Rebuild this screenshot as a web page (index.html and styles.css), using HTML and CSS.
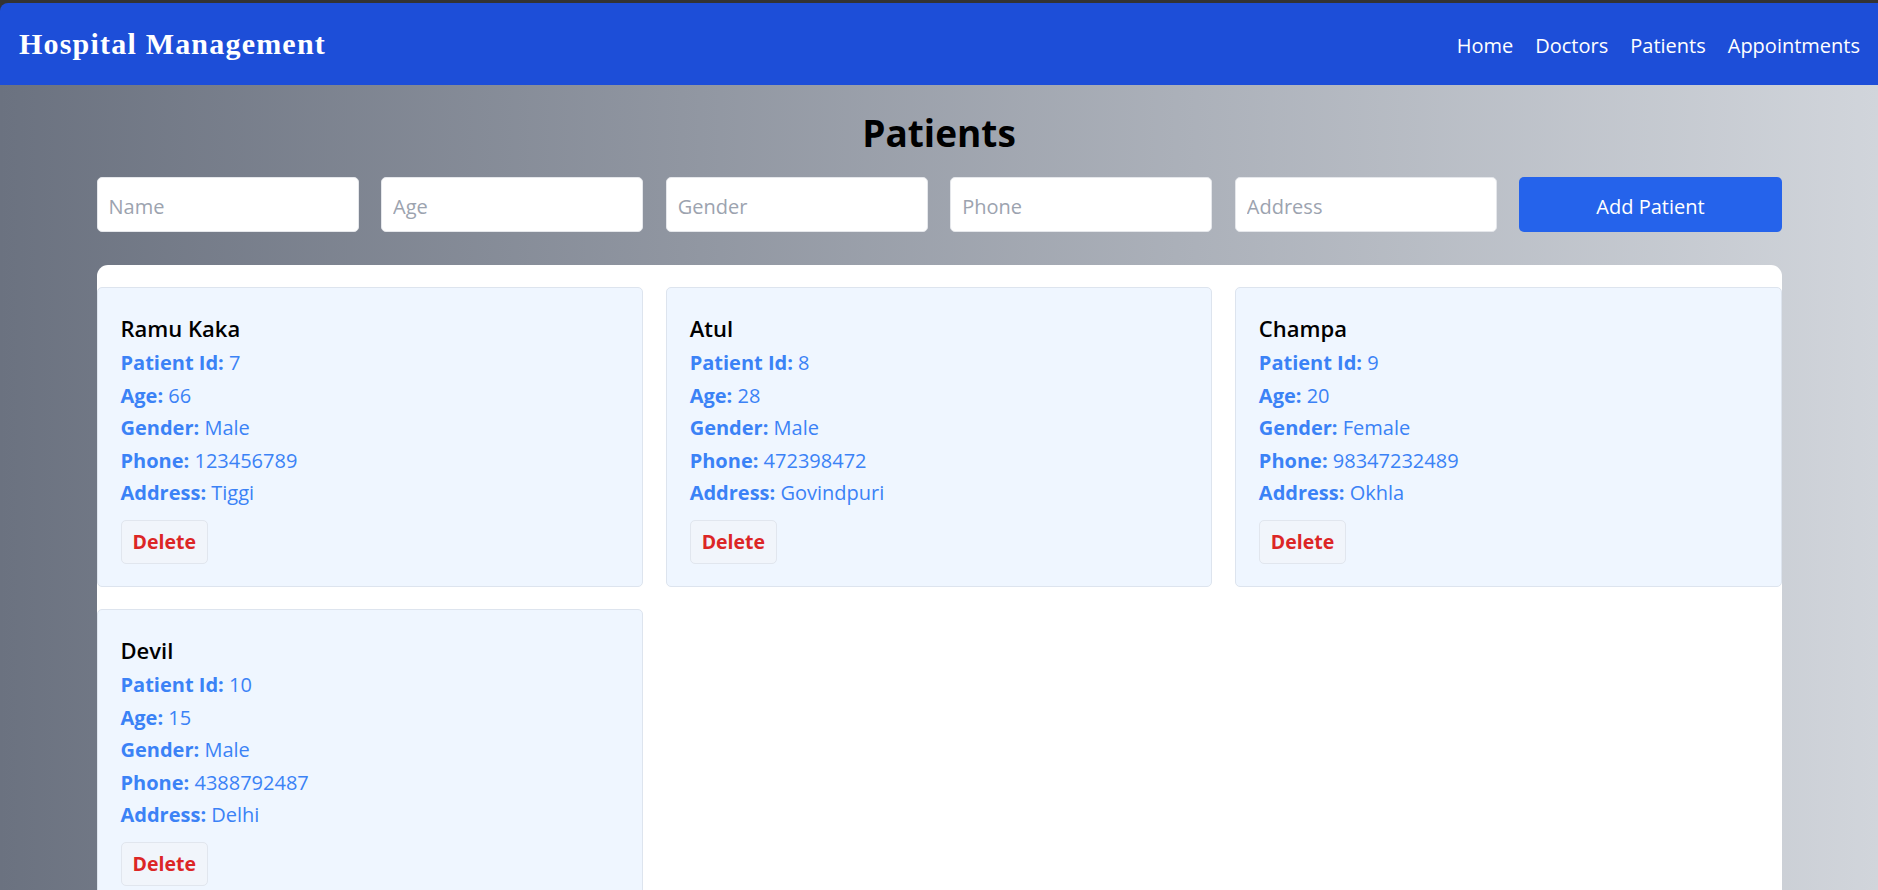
FILE: index.html
```html
<!DOCTYPE html>
<html lang="en">
<head>
<meta charset="utf-8">
<title>Hospital Management</title>
<link rel="stylesheet" href="styles.css">
</head>
<body>
<div class="frame">
  <header class="topbar">
    <div class="brand">Hospital Management</div>
    <nav class="nav">
      <a href="#" class="nav-link">Home</a>
      <a href="#" class="nav-link">Doctors</a>
      <a href="#" class="nav-link">Patients</a>
      <a href="#" class="nav-link">Appointments</a>
    </nav>
  </header>
  <main class="page">
    <div class="container">
      <h1 class="title">Patients</h1>
      <form class="add-form">
        <input class="field" type="text" placeholder="Name">
        <input class="field" type="text" placeholder="Age">
        <input class="field" type="text" placeholder="Gender">
        <input class="field" type="text" placeholder="Phone">
        <input class="field" type="text" placeholder="Address">
        <button class="add-btn" type="button">Add Patient</button>
      </form>
      <section class="panel">
        <div class="card">
          <h3 class="card-name">Ramu Kaka</h3>
          <p class="row"><b class="label">Patient Id:</b> 7</p>
          <p class="row"><b class="label">Age:</b> 66</p>
          <p class="row"><b class="label">Gender:</b> Male</p>
          <p class="row"><b class="label">Phone:</b> 123456789</p>
          <p class="row"><b class="label">Address:</b> Tiggi</p>
          <button class="del-btn" type="button">Delete</button>
        </div>
        <div class="card">
          <h3 class="card-name">Atul</h3>
          <p class="row"><b class="label">Patient Id:</b> 8</p>
          <p class="row"><b class="label">Age:</b> 28</p>
          <p class="row"><b class="label">Gender:</b> Male</p>
          <p class="row"><b class="label">Phone:</b> 472398472</p>
          <p class="row"><b class="label">Address:</b> Govindpuri</p>
          <button class="del-btn" type="button">Delete</button>
        </div>
        <div class="card">
          <h3 class="card-name">Champa</h3>
          <p class="row"><b class="label">Patient Id:</b> 9</p>
          <p class="row"><b class="label">Age:</b> 20</p>
          <p class="row"><b class="label">Gender:</b> Female</p>
          <p class="row"><b class="label">Phone:</b> 98347232489</p>
          <p class="row"><b class="label">Address:</b> Okhla</p>
          <button class="del-btn" type="button">Delete</button>
        </div>
        <div class="card">
          <h3 class="card-name">Devil</h3>
          <p class="row"><b class="label">Patient Id:</b> 10</p>
          <p class="row"><b class="label">Age:</b> 15</p>
          <p class="row"><b class="label">Gender:</b> Male</p>
          <p class="row"><b class="label">Phone:</b> 4388792487</p>
          <p class="row"><b class="label">Address:</b> Delhi</p>
          <button class="del-btn" type="button">Delete</button>
        </div>
      </section>
    </div>
  </main>
</div>
</body>
</html>
```
FILE: styles.css
```css
* { box-sizing: border-box; }

html, body {
  margin: 0;
  padding: 0;
}

body {
  font-family: "Open Sans", "Noto Sans", sans-serif;
  background: #333333;
  color: #000;
}

.frame {
  padding-top: 3px;
  background: #333333;
  min-height: 100vh;
  display: flex;
  flex-direction: column;
}

.topbar {
  height: 82px;
  background: #1d4ed8;
  border-top-left-radius: 8px;
  display: flex;
  align-items: center;
  justify-content: space-between;
  padding: 0 18px 0 19px;
}

.brand {
  font-family: "Liberation Serif", "Times New Roman", serif;
  font-weight: 700;
  font-size: 30px;
  letter-spacing: 1.2px;
  color: #ffffff;
  line-height: 1;
}

.nav {
  display: flex;
  gap: 22px;
  padding-top: 3px;
}

.nav-link {
  color: #ffffff;
  text-decoration: none;
  font-size: 20px;
  line-height: 28px;
}

.page {
  flex: 1;
  background: linear-gradient(to right, #6b7280, #d1d5db);
}

.container {
  width: 1685px;
  margin: 0 auto;
  padding-top: 26px;
}

.title {
  margin: 0 0 22px;
  text-align: center;
  font-size: 37px;
  line-height: 44px;
  font-weight: 700;
  color: #000;
}

.add-form {
  display: grid;
  grid-template-columns: repeat(6, minmax(0, 1fr));
  gap: 22.5px;
  margin: 0 0 33px;
}

.field {
  width: 100%;
  min-width: 0;
  height: 55px;
  border: 1px solid #e5e7eb;
  border-radius: 5px;
  background: #ffffff;
  padding: 3px 11px 0;
  font-family: "Open Sans", "Noto Sans", sans-serif;
  font-size: 20px;
  color: #111827;
  outline: none;
}

.field::placeholder {
  color: #9ca3af;
}

.add-btn {
  width: 100%;
  min-width: 0;
  height: 55px;
  border: none;
  border-radius: 5px;
  background: #2563eb;
  color: #ffffff;
  font-family: "Open Sans", "Noto Sans", sans-serif;
  font-size: 20px;
  padding: 3px 0 0;
  cursor: pointer;
}

.panel {
  background: #ffffff;
  border-radius: 11px;
  padding: 22px 0 24px;
  display: grid;
  grid-template-columns: repeat(3, minmax(0, 1fr));
  gap: 22.5px;
}

.card {
  background: #eff6ff;
  border: 1px solid #dde4ee;
  border-radius: 5px;
  padding: 24px 23px 22px;
  display: flex;
  flex-direction: column;
  align-items: flex-start;
}

.card-name {
  margin: 0 0 3px;
  font-size: 22px;
  line-height: 32px;
  font-weight: 600;
  color: #000;
}

.row {
  margin: 0;
  font-size: 20px;
  line-height: 32.5px;
  color: #3b82f6;
}

.label {
  font-weight: 700;
}

.del-btn {
  margin-top: 10px;
  height: 44px;
  padding: 0 11px;
  border: 1px solid #e1e6ee;
  border-radius: 5px;
  background: #f1f5fb;
  color: #dc2626;
  font-family: "Open Sans", "Noto Sans", sans-serif;
  font-weight: 700;
  font-size: 19.5px;
  line-height: 42px;
  cursor: pointer;
}
```
